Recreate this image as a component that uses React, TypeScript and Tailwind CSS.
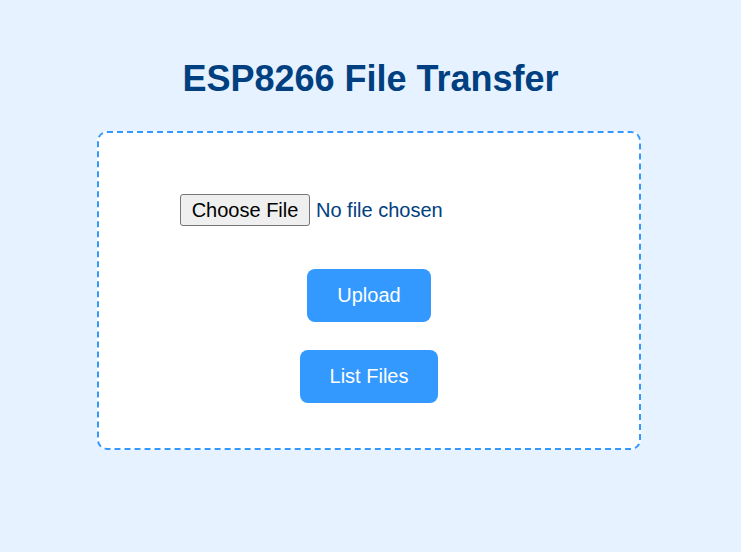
export default function App() {
  return (
    <div
      className="min-h-screen bg-[#e6f2ff] pt-[58px] pb-[60px]"
      style={{ fontFamily: '"Liberation Sans", Arial, sans-serif' }}
    >
      <h1 className="text-center text-[36px] leading-[41px] font-bold text-[#004080]">
        ESP8266 File Transfer
      </h1>
      <div className="ml-[97px] mt-[32px] w-[544px] rounded-[10px] border-2 border-dashed border-[#3399ff] bg-white pt-[61px] pb-[45px]">
        <div className="flex items-center pl-[81px]">
          <span className="flex h-[32px] w-[130px] items-center justify-center rounded-[3px] border border-[#767676] bg-[#efefef] text-[20px] leading-[23px] text-black">
            Choose File
          </span>
          <span className="ml-[6px] text-[20px] leading-[23px] text-[#004080]">No file chosen</span>
        </div>
        <div className="mt-[43px] flex flex-col items-center gap-[28px]">
          <button className="h-[53px] rounded-[8px] bg-[#3399ff] px-[30px] text-[20px] leading-[23px] text-white">
            Upload
          </button>
          <button className="h-[53px] rounded-[8px] bg-[#3399ff] px-[30px] text-[20px] leading-[23px] text-white">
            List Files
          </button>
        </div>
      </div>
    </div>
  );
}
